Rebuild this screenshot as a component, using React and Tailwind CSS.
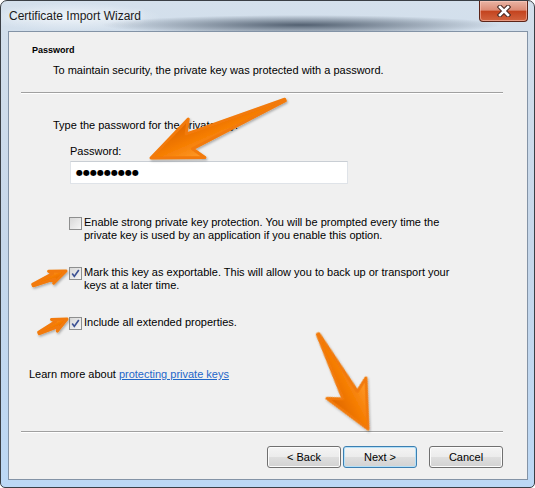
import React from "react";

const sans = "font-['Liberation_Sans',Arial,sans-serif]";

function Arrow({ x1, y1, x2, y2, bp = 0.64, bw = 20, sw = 6 }) {
  const dx = x2 - x1;
  const dy = y2 - y1;
  const len = Math.hypot(dx, dy);
  const ang = (Math.atan2(dy, dx) * 180) / Math.PI;
  const b = len * bp;
  const d = `M0 -0.8 L${b + sw} ${-sw} L${b} ${-bw} L${len} 0 L${b} ${bw} L${b + sw} ${sw} L0 0.8 Z`;
  return (
    <g transform={`translate(${x1} ${y1}) rotate(${ang})`}>
      <path
        d={d}
        fill="url(#orange)"
        stroke="#f27a08"
        strokeWidth="3"
        strokeLinejoin="round"
      />
    </g>
  );
}

function Checkbox({ checked }) {
  return (
    <div className="w-[13px] h-[13px] shrink-0 border border-[#8e8f8f] bg-[linear-gradient(135deg,#d8d8d8_0%,#f6f6f6_100%)] flex items-center justify-center">
      {checked && (
        <svg width="11" height="11" viewBox="0 0 11 11">
          <path
            d="M2.2 5.6 L4.3 8.4 L8.8 2"
            fill="none"
            stroke="#3d5294"
            strokeWidth="1.7"
          />
        </svg>
      )}
    </div>
  );
}

function WinButton({ children, primary = false, className = "" }) {
  return (
    <button
      className={
        "h-[22px] rounded-[3px] border text-[11px] text-black leading-none bg-[linear-gradient(180deg,#f4f4f4_0%,#ececec_48%,#dedede_52%,#d2d2d2_100%)] " +
        (primary
          ? "border-[#3c7fb1] shadow-[inset_0_0_0_1px_#b4e0f8] "
          : "border-[#707070] shadow-[inset_0_0_0_1px_#fcfcfc] ") +
        className
      }
    >
      {children}
    </button>
  );
}

export default function App() {
  return (
    <div className={`relative w-[535px] h-[488px] ${sans}`}>
      <div className="w-[535px] h-[488px] flex flex-col border border-[#3a3f45] rounded-t-[7px] rounded-b-[5px] bg-[linear-gradient(180deg,#d4e0ec_0%,#c6d7ea_50%,#bcd8f5_100%)] overflow-hidden">
        {/* title bar */}
        <div className="h-[30px] flex items-start bg-[radial-gradient(ellipse_200px_10px_at_300px_24px,rgba(28,42,60,0.7),rgba(28,42,60,0)),radial-gradient(ellipse_90px_14px_at_70px_16px,rgba(240,245,250,0.9),rgba(240,245,250,0))]">
          <div className="h-[30px] flex items-center pl-[8px] text-[12px] leading-[15px] text-[#1b1b1b] [text-shadow:0_0_6px_#eef3f8]">
            Certificate Import Wizard
          </div>
          <div className="ml-auto mr-[6px] w-[49px] h-[21px] rounded-b-[4px] border border-t-0 border-[#5c2418] bg-[linear-gradient(180deg,#eab4a4_0%,#dc8c76_45%,#c4441f_52%,#d2643f_100%)] shadow-[inset_0_0_0_1px_rgba(255,210,200,0.5)] flex items-center justify-center">
            <svg width="14" height="12" viewBox="0 0 14 12">
              <path d="M3 2 L11 10 M11 2 L3 10" stroke="#4a2a24" strokeWidth="4.6" strokeLinecap="square" />
              <path d="M3 2 L11 10 M11 2 L3 10" stroke="#ffffff" strokeWidth="2.6" strokeLinecap="square" />
            </svg>
          </div>
        </div>

        {/* frame sides + panel */}
        <div className="flex h-[449px] pl-[7px] pr-[6px]">
          <div className="w-[520px] h-[449px] border border-[#8393a6] bg-[#f0f0f0] flex flex-col text-[11px] leading-[13px] text-black">
            <div className="pt-[13px] pl-[23px] text-[9px] leading-[11px] font-bold">
              Password
            </div>
            <div className="mt-[8px] pl-[44px]">
              To maintain security, the private key was protected with a password.
            </div>
            <div className="mt-[15px] ml-[12px] w-[482px] h-[2px] border-t border-[#a0a0a0] border-b border-b-white" />

            <div className="mt-[25px] pl-[44px]">
              Type the password for the private key.
            </div>
            <div className="mt-[13px] pl-[61px]">Password:</div>
            <div className="mt-[3px] ml-[61px] w-[278px] h-[23px] bg-white border border-[#dfe3e8] border-t-[#c9ced4] flex items-center pl-[6px] gap-[2px] text-[8px] leading-none font-['DejaVu_Sans',sans-serif]">
              {Array.from({ length: 9 }).map((_, i) => (
                <span key={i} className="w-[5px] flex justify-center">
                  ●
                </span>
              ))}
            </div>

            <div className="mt-[32px] ml-[60px] flex items-start gap-[2px]">
              <div className="mt-[1px]">
                <Checkbox />
              </div>
              <div>
                Enable strong private key protection. You will be prompted every time the
                <br />
                private key is used by an application if you enable this option.
              </div>
            </div>

            <div className="mt-[24px] ml-[60px] flex items-start gap-[2px]">
              <div className="mt-[1px]">
                <Checkbox checked />
              </div>
              <div>
                Mark this key as exportable. This will allow you to back up or transport your
                <br />
                keys at a later time.
              </div>
            </div>

            <div className="mt-[24px] ml-[60px] flex items-start gap-[2px]">
              <div className="mt-[1px]">
                <Checkbox checked />
              </div>
              <div>Include all extended properties.</div>
            </div>

            <div className="mt-[38px] pl-[20px]">
              Learn more about{" "}
              <span className="text-[#1f67c9] underline">protecting private keys</span>
            </div>

            <div className="mt-[50px] ml-[12px] w-[482px] h-[2px] border-t border-[#a0a0a0] border-b border-b-white" />

            <div className="mt-[13px] flex pl-[258px]">
              <WinButton className="w-[74px]">{"< Back"}</WinButton>
              <WinButton primary className="w-[74px] ml-[2px]">
                {"Next >"}
              </WinButton>
              <WinButton className="w-[74px] ml-[12px]">Cancel</WinButton>
            </div>
          </div>
        </div>
      </div>

      {/* annotation arrows */}
      <svg
        className="absolute left-0 top-0 pointer-events-none"
        width="535"
        height="488"
        viewBox="0 0 535 488"
      >
        <defs>
          <linearGradient id="orange" x1="0" y1="0" x2="0" y2="1">
            <stop offset="0" stopColor="#ff9e30" />
            <stop offset="0.5" stopColor="#f57c00" />
            <stop offset="1" stopColor="#dc6400" />
          </linearGradient>
          <filter id="sh" x="-20%" y="-20%" width="140%" height="140%">
            <feDropShadow dx="1" dy="1.5" stdDeviation="1.2" floodColor="#000" floodOpacity="0.3" />
          </filter>
        </defs>
        <g filter="url(#sh)">
          <Arrow x1={285} y1={100} x2={151} y2={158} bp={0.66} bw={21} sw={8} />
          <Arrow x1={318} y1={334} x2={368} y2={429} bp={0.57} bw={22} sw={8} />
          <Arrow x1={33} y1={285} x2={66} y2={271} bp={0.55} bw={6.5} sw={2.8} />
          <Arrow x1={39} y1={333} x2={67} y2={319} bp={0.55} bw={6.5} sw={2.8} />
        </g>
      </svg>
    </div>
  );
}
